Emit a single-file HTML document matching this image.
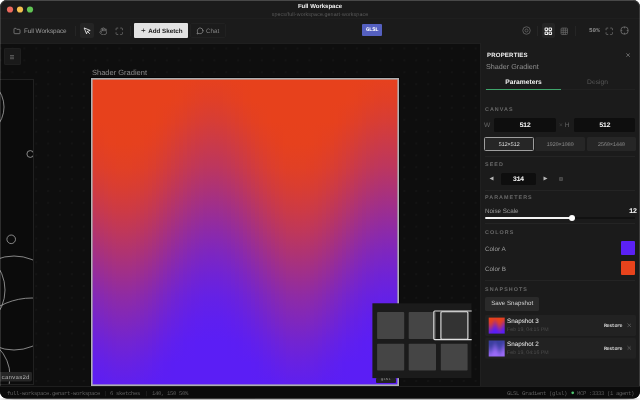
<!DOCTYPE html>
<html lang="en">
<head>
<meta charset="utf-8">
<title>Full Workspace</title>
<style>
*{box-sizing:border-box;margin:0;padding:0}
html,body{width:640px;height:400px;overflow:hidden;background:#fff}
body{font-family:"Liberation Sans",sans-serif;color:#ddd;position:relative}
.mono{font-family:"Liberation Mono",monospace}
#win{position:absolute;left:0;top:0;width:640px;height:398.6px;overflow:hidden;background:#0e0e0e;clip-path:inset(0px 0px 0px 0px round 7px)}
#win div{will-change:transform}
body{-webkit-font-smoothing:antialiased;text-rendering:geometricPrecision}
.abs{position:absolute}
.t{position:absolute;white-space:nowrap;line-height:1}
/* title bar */
#titlebar{position:absolute;left:0;top:0;width:640px;height:18.5px;background:#1b1b1b;box-shadow:inset 0 -1px 0 #1f1f1f}
.tl{position:absolute;top:6.3px;width:6.4px;height:6.4px;border-radius:50%}
#toolbar{position:absolute;left:0;top:18.5px;width:640px;height:24.5px;background:#1b1b1b;box-shadow:inset 0 -1px 0 #1f1f1f}
.sep{position:absolute;top:7px;width:1px;height:10px;background:#252525}
.tbtn{position:absolute;top:4px;height:14.5px;border-radius:2px}
/* canvas */
#canvas{position:absolute;left:0;top:43px;width:480px;height:343.4px;background-color:#0e0e0e;
 background-image:radial-gradient(circle,#1f1f1f 0.4px,transparent 0.85px);background-size:11.88px 11.88px;background-position:6.56px -0.44px;overflow:hidden}
/* panel */
#panel{position:absolute;left:480px;top:43px;width:160px;height:343.4px;background:#1b1b1b;box-shadow:inset 1px 0 0 #202020}
.lab{position:absolute;left:5px;font-size:5.4px;letter-spacing:1.04px;color:#686868;font-weight:bold;line-height:1;white-space:nowrap}
.div{position:absolute;left:5px;width:150px;height:1px;background:#242424}
.inp{position:absolute;background:#0e0e0e;border-radius:1.5px;color:#f4f4f4;font-weight:bold;font-size:6.9px;letter-spacing:-0.5px;text-align:center}
.preset{position:absolute;top:94px;height:14.2px;background:#262626;border-radius:1.5px;color:#848484;font-size:5.6px;letter-spacing:-0.36px;text-align:center;line-height:15.6px}
.row{position:absolute;left:4.5px;width:151.2px;height:20.5px;background:#222;border-radius:1.5px}
#status{position:absolute;left:0;top:386px;width:640px;height:14px;background:#0b0b0b;box-shadow:inset 0 1px 0 #1e1e1e;font-size:5.6px;letter-spacing:-0.36px;color:#5e5e5e}
</style>
</head>
<body>
<div class="abs" style="left:0;top:398px;width:640px;height:2px;background:linear-gradient(to right,#f4f4f4 0,#e0e0e0 5px,#c0c0c0 14px,#bbb 30px,#bbb 610px,#c0c0c0 626px,#e0e0e0 635px,#f4f4f4 640px)"></div>
<div id="win">

<!-- canvas -->
<div id="canvas">
  <!-- menu button -->
  <div class="abs" style="left:4px;top:5px;width:16.6px;height:17px;background:#1a1a1a;border-radius:2px;box-shadow:inset 0 0 0 0.6px #242424"></div>
  <svg class="abs" style="left:10.2px;top:12.3px" width="4.3" height="4.3" viewBox="0 0 9 9" stroke="#747474" stroke-width="1.5"><path d="M0 1.2H9M0 4.500H9M0 7.800H9"/></svg>

  <!-- left sketch -->
  <div class="abs" style="left:-120px;top:36px;width:154px;height:306px;background:#0b0b0b;border:1px solid #212121;overflow:hidden">
    <svg width="154" height="306" viewBox="-120 79 154 306" style="position:absolute;left:-1px;top:-1px" fill="none" stroke="#a4a4a4" stroke-width="0.8">
      <circle cx="-26" cy="107" r="30"/>
      <circle cx="30.300" cy="154" r="3.400"/>
      <circle cx="11.200" cy="239.300" r="4.300"/>
      <circle cx="14" cy="303" r="47"/>
      <circle cx="32" cy="366" r="68"/>
      <circle cx="-37.500" cy="290" r="42.500"/>
      <circle cx="-30" cy="376" r="40"/>
    </svg>
  </div>
  <div class="abs mono" style="left:-3px;top:328px;transform:translateY(0.5px);width:35px;height:10px;background:#262626;border-radius:2px;color:#b4b4b4;font-size:5.800px;line-height:11.400px;padding-left:4.500px;letter-spacing:0.020px">canvas2d</div>

  <!-- main sketch -->
  <div class="t" style="left:92.2px;top:25px;transform:translateY(0.7px);font-size:7.5px;color:#8c8c8c">Shader Gradient</div>
  <div class="abs" style="left:90px;top:34px;width:310px;height:310px;background:#050505;border-radius:1px"></div>
  <div class="abs" style="left:91px;top:35px;width:308px;height:308px;background:#adafb1;overflow:hidden">
    <div style="position:absolute;left:1px;top:1px;width:306px;height:306px;display:flex">
<i style="flex:1 0 0;background:linear-gradient(#e7411c 0%,#e7411c 7%,#e7411d 14%,#e24023 21%,#da3e30 29%,#cf3b41 36%,#c13856 43%,#b2346e 50%,#a23087 57%,#922ca0 64%,#8228b8 71%,#7424ce 79%,#6921e0 86%,#601fed 93%,#5c1ef4 100%)"></i>
<i style="flex:1 0 0;background:linear-gradient(#e7411c 0%,#e7411c 7%,#e7411c 14%,#e44021 21%,#dc3e2d 29%,#d13c3d 36%,#c43852 43%,#b53569 50%,#a53082 57%,#952c9c 64%,#8529b4 71%,#7725ca 79%,#6b22dd 86%,#6220eb 93%,#5c1ef3 100%)"></i>
<i style="flex:1 0 0;background:linear-gradient(#e7411c 0%,#e7411c 7%,#e7411c 14%,#e44020 21%,#de3f2a 29%,#d33c3a 36%,#c7394e 43%,#b83565 50%,#a8317e 57%,#982d97 64%,#8829b0 71%,#7926c6 79%,#6d22da 86%,#6320e9 93%,#5d1ef2 100%)"></i>
<i style="flex:1 0 0;background:linear-gradient(#e7411c 0%,#e7411c 7%,#e7411c 14%,#e5411f 21%,#df3f28 29%,#d53d38 36%,#c9394b 43%,#ba3662 50%,#aa327a 57%,#9a2e93 64%,#8a2aac 71%,#7b26c3 79%,#6e23d7 86%,#6420e7 93%,#5d1ff1 100%)"></i>
<i style="flex:1 0 0;background:linear-gradient(#e7411c 0%,#e7411c 7%,#e7411c 14%,#e6411e 21%,#e03f27 29%,#d73d35 36%,#ca3a48 43%,#bc365f 50%,#ac3277 57%,#9c2e90 64%,#8c2aa9 71%,#7d26c0 79%,#7023d5 86%,#6521e5 93%,#5e1ff0 100%)"></i>
<i style="flex:1 0 0;background:linear-gradient(#e7411c 0%,#e7411c 7%,#e7411c 14%,#e6411e 21%,#e13f26 29%,#d83d34 36%,#cc3a46 43%,#bd375d 50%,#ae3375 57%,#9e2f8e 64%,#8d2ba7 71%,#7e27be 79%,#7123d3 86%,#6621e4 93%,#5f1fef 100%)"></i>
<i style="flex:1 0 0;background:linear-gradient(#e7411c 0%,#e7411c 7%,#e7411c 14%,#e6411d 21%,#e14025 29%,#d83d33 36%,#cc3a45 43%,#be375b 50%,#af3373 57%,#9f2f8c 64%,#8e2ba5 71%,#7f27bd 79%,#7224d2 86%,#6721e3 93%,#5f1fef 100%)"></i>
<i style="flex:1 0 0;background:linear-gradient(#e7411c 0%,#e7411c 7%,#e7411c 14%,#e6411d 21%,#e14025 29%,#d93d32 36%,#cd3a44 43%,#bf375a 50%,#af3372 57%,#9f2f8b 64%,#8f2ba4 71%,#8027bc 79%,#7224d1 86%,#6721e2 93%,#5f1fef 100%)"></i>
<i style="flex:1 0 0;background:linear-gradient(#e7411c 0%,#e7411c 7%,#e7411c 14%,#e6411d 21%,#e14025 29%,#d93d32 36%,#cd3a44 43%,#bf375a 50%,#af3372 57%,#9f2f8b 64%,#8f2ba4 71%,#8027bc 79%,#7224d1 86%,#6721e2 93%,#5f1fef 100%)"></i>
<i style="flex:1 0 0;background:linear-gradient(#e7411c 0%,#e7411c 7%,#e7411c 14%,#e6411d 21%,#e14025 29%,#d83d33 36%,#cd3a45 43%,#be375b 50%,#af3373 57%,#9f2f8c 64%,#8f2ba5 71%,#7f27bd 79%,#7224d2 86%,#6721e3 93%,#5f1fef 100%)"></i>
<i style="flex:1 0 0;background:linear-gradient(#e7411c 0%,#e7411c 7%,#e7411c 14%,#e6411e 21%,#e13f26 29%,#d83d34 36%,#cc3a46 43%,#bd375c 50%,#ae3375 57%,#9e2f8e 64%,#8e2ba7 71%,#7e27be 79%,#7124d3 86%,#6621e4 93%,#5f1fef 100%)"></i>
<i style="flex:1 0 0;background:linear-gradient(#e7411c 0%,#e7411c 7%,#e7411c 14%,#e6411e 21%,#e03f27 29%,#d73d35 36%,#ca3a48 43%,#bc365f 50%,#ac3277 57%,#9c2e90 64%,#8c2aa9 71%,#7d27c0 79%,#7023d5 86%,#6521e5 93%,#5e1ff0 100%)"></i>
<i style="flex:1 0 0;background:linear-gradient(#e7411c 0%,#e7411c 7%,#e7411c 14%,#e5411f 21%,#df3f28 29%,#d53d37 36%,#c9394b 43%,#ba3661 50%,#aa327a 57%,#9a2e93 64%,#8a2aac 71%,#7b26c3 79%,#6e23d7 86%,#6420e7 93%,#5d1ff1 100%)"></i>
<i style="flex:1 0 0;background:linear-gradient(#e7411c 0%,#e7411c 7%,#e7411c 14%,#e54020 21%,#de3f2a 29%,#d43c3a 36%,#c7394e 43%,#b83565 50%,#a8317e 57%,#982d97 64%,#8829af 71%,#7926c6 79%,#6d22d9 86%,#6320e9 93%,#5d1ef2 100%)"></i>
<i style="flex:1 0 0;background:linear-gradient(#e7411c 0%,#e7411c 7%,#e7411c 14%,#e44021 21%,#dc3e2d 29%,#d23c3d 36%,#c43852 43%,#b53569 50%,#a53182 57%,#952c9b 64%,#8529b3 71%,#7725ca 79%,#6b22dc 86%,#6220eb 93%,#5c1ef3 100%)"></i>
<i style="flex:1 0 0;background:linear-gradient(#e7411c 0%,#e7411c 7%,#e7411d 14%,#e34023 21%,#db3e2f 29%,#cf3b41 36%,#c23856 43%,#b2346e 50%,#a23087 57%,#922ca0 64%,#8228b8 71%,#7524cd 79%,#6921df 86%,#601fed 93%,#5c1ef4 100%)"></i>
<i style="flex:1 0 0;background:linear-gradient(#e7411c 0%,#e7411c 7%,#e6411d 14%,#e14025 21%,#d83d33 29%,#cd3a45 36%,#bf375b 43%,#af3373 50%,#9f2f8c 57%,#8f2ba5 64%,#7f27bd 71%,#7224d1 79%,#6721e3 86%,#5f1fef 93%,#5b1ef5 100%)"></i>
<i style="flex:1 0 0;background:linear-gradient(#e7411c 0%,#e7411c 7%,#e5411e 14%,#e03f27 21%,#d63d36 29%,#ca3a49 36%,#bb3660 43%,#ab3278 50%,#9b2e91 57%,#8b2aaa 64%,#7c26c1 71%,#6f23d6 79%,#6520e6 86%,#5e1ff1 93%,#5b1ef5 100%)"></i>
<i style="flex:1 0 0;background:linear-gradient(#e7411c 0%,#e7411c 7%,#e54020 14%,#de3f2a 21%,#d43c3a 29%,#c7394e 36%,#b83565 43%,#a8317e 50%,#982d97 57%,#8829b0 64%,#7926c6 71%,#6d22da 79%,#6320e9 86%,#5d1ef2 93%,#5b1ef5 100%)"></i>
<i style="flex:1 0 0;background:linear-gradient(#e7411c 0%,#e7411c 7%,#e34022 14%,#dc3e2e 21%,#d13b3e 29%,#c33853 36%,#b4346b 43%,#a43084 50%,#942c9d 57%,#8428b5 64%,#7625cb 71%,#6a22de 79%,#6120eb 86%,#5c1ef3 93%,#5b1ef5 100%)"></i>
<i style="flex:1 0 0;background:linear-gradient(#e7411c 0%,#e6411d 7%,#e24024 14%,#d93e31 21%,#ce3b43 29%,#c03758 36%,#b13370 43%,#a02f89 50%,#902ba2 57%,#8127ba 64%,#7324d0 71%,#6821e1 79%,#601fee 86%,#5b1ef4 93%,#5b1ef5 100%)"></i>
<i style="flex:1 0 0;background:linear-gradient(#e7411c 0%,#e6411e 7%,#e03f26 14%,#d73d35 21%,#cb3a47 29%,#bd365d 36%,#ad3376 43%,#9d2e8f 50%,#8d2aa8 57%,#7e27bf 64%,#7023d4 71%,#6621e4 79%,#5e1ff0 86%,#5b1ef5 93%,#5b1ef5 100%)"></i>
<i style="flex:1 0 0;background:linear-gradient(#e7411c 0%,#e5411f 7%,#df3f29 14%,#d53c38 21%,#c8394c 29%,#ba3662 36%,#aa327b 43%,#992e94 50%,#8a2aad 57%,#7b26c4 64%,#6e23d8 71%,#6420e7 79%,#5d1ff1 86%,#5b1ef5 93%,#5b1ef5 100%)"></i>
<i style="flex:1 0 0;background:linear-gradient(#e7411c 0%,#e44020 7%,#dd3f2b 14%,#d33c3c 21%,#c53950 29%,#b73567 36%,#a73180 43%,#962d99 50%,#8729b1 57%,#7825c8 64%,#6c22db 71%,#6220ea 79%,#5c1ef3 86%,#5b1ef5 93%,#5b1ef5 100%)"></i>
<i style="flex:1 0 0;background:linear-gradient(#e7411c 0%,#e34022 7%,#db3e2e 14%,#d03b3f 21%,#c33854 29%,#b4346b 36%,#a43084 43%,#932c9d 50%,#8428b6 57%,#7625cb 64%,#6a22de 71%,#611fec 79%,#5c1ef4 86%,#5b1ef5 93%,#5b1ef5 100%)"></i>
<i style="flex:1 0 0;background:linear-gradient(#e7411d 0%,#e24023 7%,#da3e30 14%,#cf3b42 21%,#c13757 29%,#b1346f 36%,#a13088 43%,#912ca1 50%,#8228b9 57%,#7424cf 64%,#6821e0 71%,#601fed 79%,#5c1ef4 86%,#5b1ef5 93%,#5b1ef5 100%)"></i>
<i style="flex:1 0 0;background:linear-gradient(#e6411d 0%,#e14025 7%,#d93d32 14%,#cd3a44 21%,#bf375a 29%,#af3372 36%,#9f2f8b 43%,#8f2ba4 50%,#8027bc 57%,#7224d1 64%,#6721e2 71%,#5f1fef 79%,#5b1ef5 86%,#5b1ef5 93%,#5b1ef5 100%)"></i>
<i style="flex:1 0 0;background:linear-gradient(#e6411e 0%,#e13f26 7%,#d83d34 14%,#cc3a46 21%,#bd375d 29%,#ae3375 36%,#9e2f8e 43%,#8d2ba7 50%,#7e27be 57%,#7123d3 64%,#6621e4 71%,#5f1fef 79%,#5b1ef5 86%,#5b1ef5 93%,#5b1ef5 100%)"></i>
<i style="flex:1 0 0;background:linear-gradient(#e6411e 0%,#e03f27 7%,#d73d35 14%,#cb3a48 21%,#bc365e 29%,#ad3276 36%,#9c2e90 43%,#8c2aa9 50%,#7d27c0 57%,#7023d4 64%,#6521e5 71%,#5e1ff0 79%,#5b1ef5 86%,#5b1ef5 93%,#5b1ef5 100%)"></i>
<i style="flex:1 0 0;background:linear-gradient(#e6411e 0%,#e03f27 7%,#d63d36 14%,#ca3a49 21%,#bc365f 29%,#ac3277 36%,#9c2e91 43%,#8c2aa9 50%,#7d26c1 57%,#7023d5 64%,#6521e5 71%,#5e1ff0 79%,#5b1ef5 86%,#5b1ef5 93%,#5b1ef5 100%)"></i>
<i style="flex:1 0 0;background:linear-gradient(#e6411e 0%,#e03f27 7%,#d63d36 14%,#ca3a49 21%,#bc365f 29%,#ac3278 36%,#9c2e91 43%,#8c2aaa 50%,#7d26c1 57%,#7023d5 64%,#6521e5 71%,#5e1ff0 79%,#5b1ef5 86%,#5b1ef5 93%,#5b1ef5 100%)"></i>
<i style="flex:1 0 0;background:linear-gradient(#e6411e 0%,#e03f27 7%,#d73d35 14%,#ca3a48 21%,#bc365f 29%,#ac3277 36%,#9c2e90 43%,#8c2aa9 50%,#7d27c0 57%,#7023d5 64%,#6521e5 71%,#5e1ff0 79%,#5b1ef5 86%,#5b1ef5 93%,#5b1ef5 100%)"></i>
<i style="flex:1 0 0;background:linear-gradient(#e6411e 0%,#e03f26 7%,#d73d34 14%,#cb3a47 21%,#bd365d 29%,#ad3375 36%,#9d2f8f 43%,#8d2aa8 50%,#7e27bf 57%,#7123d4 64%,#6621e4 71%,#5e1ff0 79%,#5b1ef5 86%,#5b1ef5 93%,#5b1ef5 100%)"></i>
<i style="flex:1 0 0;background:linear-gradient(#e6411d 0%,#e14025 7%,#d83d33 14%,#cc3a45 21%,#be375b 29%,#af3373 36%,#9e2f8c 43%,#8e2ba5 50%,#7f27bd 57%,#7224d2 64%,#6721e3 71%,#5f1fef 79%,#5b1ef5 86%,#5b1ef5 93%,#5b1ef5 100%)"></i>
<i style="flex:1 0 0;background:linear-gradient(#e6411d 0%,#e24024 7%,#d93e31 14%,#ce3b43 21%,#c03758 29%,#b13370 36%,#a02f89 43%,#902ba2 50%,#8127ba 57%,#7324d0 64%,#6821e1 71%,#601fee 79%,#5b1ef4 86%,#5b1ef5 93%,#5b1ef5 100%)"></i>
<i style="flex:1 0 0;background:linear-gradient(#e7411c 0%,#e34022 7%,#db3e2f 14%,#d03b40 21%,#c23855 29%,#b3346d 36%,#a33086 43%,#932c9f 50%,#8328b7 57%,#7525cd 64%,#6922df 71%,#611fec 79%,#5c1ef4 86%,#5b1ef5 93%,#5b1ef5 100%)"></i>
<i style="flex:1 0 0;background:linear-gradient(#e7411c 0%,#e44021 7%,#dc3e2c 14%,#d23c3d 21%,#c53851 29%,#b63569 36%,#a53182 43%,#952d9b 50%,#8629b3 57%,#7725c9 64%,#6b22dc 71%,#6220ea 79%,#5c1ef3 86%,#5b1ef5 93%,#5b1ef5 100%)"></i>
<i style="flex:1 0 0;background:linear-gradient(#e7411c 0%,#e54020 7%,#de3f2a 14%,#d43c39 21%,#c7394d 29%,#b83564 36%,#a9317d 43%,#982d96 50%,#8829af 57%,#7a26c5 64%,#6d23d9 71%,#6320e8 79%,#5d1ef2 86%,#5b1ef5 93%,#5b1ef5 100%)"></i>
<i style="flex:1 0 0;background:linear-gradient(#e7411c 0%,#e6411e 7%,#e03f27 14%,#d63d36 21%,#ca3a49 29%,#bc365f 36%,#ac3278 43%,#9c2e91 50%,#8c2aaa 57%,#7d26c1 64%,#7023d5 71%,#6521e5 79%,#5e1ff0 86%,#5b1ef5 93%,#5b1ef5 100%)"></i>
<i style="flex:1 0 0;background:linear-gradient(#e7411c 0%,#e6411d 7%,#e14025 14%,#d93d32 21%,#cd3a44 29%,#bf375a 36%,#af3372 43%,#9f2f8b 50%,#8f2ba4 57%,#8027bc 64%,#7224d1 71%,#6721e2 79%,#5f1fef 86%,#5b1ef5 93%,#5b1ef5 100%)"></i>
<i style="flex:1 0 0;background:linear-gradient(#e7411c 0%,#e7411c 7%,#e34022 14%,#db3e2f 21%,#d03b40 29%,#c23855 36%,#b3346d 43%,#a33086 50%,#932c9f 57%,#8328b7 64%,#7525cd 71%,#6922df 79%,#611fec 86%,#5c1ef4 93%,#5b1ef5 100%)"></i>
<i style="flex:1 0 0;background:linear-gradient(#e7411c 0%,#e7411c 7%,#e44021 14%,#dd3f2b 21%,#d33c3c 29%,#c53950 36%,#b63567 43%,#a63180 50%,#962d99 57%,#8629b2 64%,#7825c8 71%,#6c22db 79%,#6220ea 86%,#5c1ef3 93%,#5b1ef5 100%)"></i>
<i style="flex:1 0 0;background:linear-gradient(#e7411c 0%,#e7411c 7%,#e5411f 14%,#df3f28 21%,#d53d38 29%,#c9394b 36%,#ba3662 43%,#aa327a 50%,#9a2e94 57%,#8a2aac 64%,#7b26c3 71%,#6e23d7 79%,#6420e7 86%,#5d1ff1 93%,#5b1ef5 100%)"></i>
<i style="flex:1 0 0;background:linear-gradient(#e7411c 0%,#e7411c 7%,#e6411e 14%,#e13f26 21%,#d83d34 29%,#cc3a47 36%,#bd375d 43%,#ae3375 50%,#9d2f8e 57%,#8d2ba7 64%,#7e27be 71%,#7123d3 79%,#6621e4 86%,#5f1fef 93%,#5b1ef5 100%)"></i>
<i style="flex:1 0 0;background:linear-gradient(#e7411c 0%,#e7411c 7%,#e7411d 14%,#e24024 21%,#da3e30 29%,#ce3b42 36%,#c13758 43%,#b13470 50%,#a12f89 57%,#912ba2 64%,#8128ba 71%,#7424cf 79%,#6821e1 86%,#601fee 93%,#5b1ef4 100%)"></i>
<i style="flex:1 0 0;background:linear-gradient(#e7411c 0%,#e7411c 7%,#e7411c 14%,#e34022 21%,#dc3e2e 29%,#d13b3e 36%,#c33853 43%,#b4346b 50%,#a43084 57%,#942c9d 64%,#8428b5 71%,#7625cb 79%,#6a22de 86%,#6120eb 93%,#5c1ef3 100%)"></i>
<i style="flex:1 0 0;background:linear-gradient(#e7411c 0%,#e7411c 7%,#e7411c 14%,#e44020 21%,#dd3f2b 29%,#d33c3b 36%,#c6394f 43%,#b73566 50%,#a7317f 57%,#972d98 64%,#8729b1 71%,#7925c7 79%,#6c22db 86%,#6320e9 93%,#5d1ef3 100%)"></i>
<i style="flex:1 0 0;background:linear-gradient(#e7411c 0%,#e7411c 7%,#e7411c 14%,#e5401f 21%,#df3f29 29%,#d53c38 36%,#c8394c 43%,#b93663 50%,#aa327b 57%,#992e94 64%,#892aad 71%,#7b26c4 79%,#6e23d8 86%,#6420e7 93%,#5d1ff2 100%)"></i>
<i style="flex:1 0 0;background:linear-gradient(#e7411c 0%,#e7411c 7%,#e7411c 14%,#e6411e 21%,#e03f27 29%,#d63d36 36%,#ca3a49 43%,#bb3660 50%,#ac3278 57%,#9b2e91 64%,#8b2aaa 71%,#7d26c1 79%,#6f23d5 86%,#6520e6 93%,#5e1ff1 100%)"></i>
<i style="flex:1 0 0;background:linear-gradient(#e7411c 0%,#e7411c 7%,#e7411c 14%,#e6411e 21%,#e03f26 29%,#d73d34 36%,#cb3a47 43%,#bd375d 50%,#ad3375 57%,#9d2f8e 64%,#8d2ba7 71%,#7e27bf 79%,#7123d3 86%,#6621e4 93%,#5e1ff0 100%)"></i>
<i style="flex:1 0 0;background:linear-gradient(#e7411c 0%,#e7411c 7%,#e7411c 14%,#e6411d 21%,#e14025 29%,#d83d33 36%,#cc3a45 43%,#be375b 50%,#af3373 57%,#9e2f8d 64%,#8e2ba6 71%,#7f27bd 79%,#7224d2 86%,#6721e3 93%,#5f1fef 100%)"></i>
<i style="flex:1 0 0;background:linear-gradient(#e7411c 0%,#e7411c 7%,#e7411c 14%,#e6411d 21%,#e14025 29%,#d93d32 36%,#cd3a45 43%,#bf375a 50%,#af3372 57%,#9f2f8c 64%,#8f2ba5 71%,#8027bc 79%,#7224d1 86%,#6721e2 93%,#5f1fef 100%)"></i>
<i style="flex:1 0 0;background:linear-gradient(#e7411c 0%,#e7411c 7%,#e7411c 14%,#e6411d 21%,#e14025 29%,#d93d32 36%,#cd3a44 43%,#bf375a 50%,#af3372 57%,#9f2f8b 64%,#8f2ba4 71%,#8027bc 79%,#7224d1 86%,#6721e2 93%,#5f1fef 100%)"></i>
<i style="flex:1 0 0;background:linear-gradient(#e7411c 0%,#e7411c 7%,#e7411c 14%,#e6411d 21%,#e14025 29%,#d83d33 36%,#cd3a45 43%,#bf375b 50%,#af3373 57%,#9f2f8c 64%,#8f2ba5 71%,#8027bc 79%,#7224d1 86%,#6721e3 93%,#5f1fef 100%)"></i>
<i style="flex:1 0 0;background:linear-gradient(#e7411c 0%,#e7411c 7%,#e7411c 14%,#e6411d 21%,#e13f26 29%,#d83d33 36%,#cc3a46 43%,#be375c 50%,#ae3374 57%,#9e2f8d 64%,#8e2ba6 71%,#7f27be 79%,#7124d2 86%,#6621e3 93%,#5f1fef 100%)"></i>
<i style="flex:1 0 0;background:linear-gradient(#e7411c 0%,#e7411c 7%,#e7411c 14%,#e6411e 21%,#e03f26 29%,#d73d35 36%,#cb3a48 43%,#bd365e 50%,#ad3276 57%,#9d2e8f 64%,#8d2aa8 71%,#7e27c0 79%,#7023d4 86%,#6621e5 93%,#5e1ff0 100%)"></i>
<i style="flex:1 0 0;background:linear-gradient(#e7411c 0%,#e7411c 7%,#e7411c 14%,#e5411f 21%,#df3f28 29%,#d63d37 36%,#c93a4a 43%,#bb3661 50%,#ab3279 57%,#9b2e92 64%,#8b2aab 71%,#7c26c2 79%,#6f23d6 86%,#6520e6 93%,#5e1ff1 100%)"></i>
<i style="flex:1 0 0;background:linear-gradient(#e7411c 0%,#e7411c 7%,#e7411c 14%,#e5401f 21%,#de3f2a 29%,#d43c39 36%,#c7394d 43%,#b93564 50%,#a9317d 57%,#982d96 64%,#8929ae 71%,#7a26c5 79%,#6d23d9 86%,#6320e8 93%,#5d1ff2 100%)"></i>
<i style="flex:1 0 0;background:linear-gradient(#e7411c 0%,#e7411c 7%,#e7411c 14%,#e44021 21%,#dd3e2c 29%,#d23c3c 36%,#c53951 43%,#b63568 50%,#a63181 57%,#962d9a 64%,#8629b2 71%,#7825c9 79%,#6b22dc 86%,#6220ea 93%,#5c1ef3 100%)"></i>
<i style="flex:1 0 0;background:linear-gradient(#e7411c 0%,#e7411c 7%,#e7411c 14%,#e34022 21%,#db3e2f 29%,#d03b40 36%,#c23855 43%,#b3346c 50%,#a33085 57%,#932c9e 64%,#8328b7 71%,#7525cc 79%,#6922df 86%,#611fec 93%,#5c1ef4 100%)"></i>
<i style="flex:1 0 0;background:linear-gradient(#e7411c 0%,#e7411c 7%,#e6411d 14%,#e24024 21%,#d93e32 29%,#cd3b44 36%,#bf3759 43%,#b03371 50%,#a02f8a 57%,#902ba3 64%,#8027bb 71%,#7324d0 79%,#6721e2 86%,#5f1fee 93%,#5b1ef4 100%)"></i>
<i style="flex:1 0 0;background:linear-gradient(#e7411c 0%,#e7411c 7%,#e6411e 14%,#e03f27 21%,#d73d35 29%,#cb3a48 36%,#bc365e 43%,#ac3277 50%,#9c2e90 57%,#8c2aa9 64%,#7d27c0 71%,#7023d4 79%,#6521e5 86%,#5e1ff0 93%,#5b1ef5 100%)"></i>
<i style="flex:1 0 0;background:linear-gradient(#e7411c 0%,#e7411c 7%,#e5401f 14%,#de3f2a 21%,#d43c39 29%,#c7394d 36%,#b93564 43%,#a9317c 50%,#992d96 57%,#8929ae 64%,#7a26c5 71%,#6d23d9 79%,#6320e8 86%,#5d1ff2 93%,#5b1ef5 100%)"></i>
<i style="flex:1 0 0;background:linear-gradient(#e7411c 0%,#e7411c 7%,#e44021 14%,#dc3e2d 21%,#d23c3d 29%,#c43852 36%,#b53569 43%,#a53182 50%,#952c9b 57%,#8529b4 64%,#7725ca 71%,#6b22dc 79%,#6220eb 86%,#5c1ef3 93%,#5b1ef5 100%)"></i>
<i style="flex:1 0 0;background:linear-gradient(#e7411c 0%,#e7411d 7%,#e24023 14%,#da3e30 21%,#cf3b42 29%,#c13757 36%,#b2346f 43%,#a13088 50%,#912ca1 57%,#8228b9 64%,#7424ce 71%,#6821e0 79%,#601fed 86%,#5c1ef4 93%,#5b1ef5 100%)"></i>
<i style="flex:1 0 0;background:linear-gradient(#e7411c 0%,#e6411e 7%,#e13f26 14%,#d83d34 21%,#cc3a46 29%,#be375c 36%,#ae3374 43%,#9e2f8d 50%,#8e2ba6 57%,#7f27be 64%,#7124d3 71%,#6621e4 79%,#5f1fef 86%,#5b1ef5 93%,#5b1ef5 100%)"></i>
<i style="flex:1 0 0;background:linear-gradient(#e7411c 0%,#e5411f 7%,#df3f28 14%,#d53d37 21%,#c9394b 29%,#ba3661 36%,#ab327a 43%,#9a2e93 50%,#8a2aac 57%,#7c26c3 64%,#6f23d7 71%,#6420e6 79%,#5e1ff1 86%,#5b1ef5 93%,#5b1ef5 100%)"></i>
<i style="flex:1 0 0;background:linear-gradient(#e7411c 0%,#e44020 7%,#de3f2b 14%,#d33c3b 21%,#c6394f 29%,#b73566 36%,#a7317f 43%,#972d98 50%,#8729b0 57%,#7925c7 64%,#6c22da 71%,#6320e9 79%,#5d1ef2 86%,#5b1ef5 93%,#5b1ef5 100%)"></i>
<i style="flex:1 0 0;background:linear-gradient(#e7411c 0%,#e34022 7%,#dc3e2d 14%,#d13c3e 21%,#c43853 29%,#b5346a 36%,#a43083 43%,#942c9c 50%,#8528b5 57%,#7625cb 64%,#6a22dd 71%,#6120eb 79%,#5c1ef3 86%,#5b1ef5 93%,#5b1ef5 100%)"></i>
<i style="flex:1 0 0;background:linear-gradient(#e7411d 0%,#e24023 7%,#da3e30 14%,#cf3b41 21%,#c13856 29%,#b2346e 36%,#a23087 43%,#922ca0 50%,#8228b8 57%,#7424ce 64%,#6921e0 71%,#601fed 79%,#5c1ef4 86%,#5b1ef5 93%,#5b1ef5 100%)"></i>
<i style="flex:1 0 0;background:linear-gradient(#e6411d 0%,#e24024 7%,#d93d32 14%,#cd3b44 21%,#bf3759 29%,#b03371 36%,#a02f8b 43%,#902ba4 50%,#8027bb 57%,#7324d0 64%,#6721e2 71%,#5f1fee 79%,#5b1ef5 86%,#5b1ef5 93%,#5b1ef5 100%)"></i>
<i style="flex:1 0 0;background:linear-gradient(#e6411e 0%,#e13f26 7%,#d83d33 14%,#cc3a46 21%,#be375c 29%,#ae3374 36%,#9e2f8d 43%,#8e2ba6 50%,#7f27be 57%,#7124d3 64%,#6621e3 71%,#5f1fef 79%,#5b1ef5 86%,#5b1ef5 93%,#5b1ef5 100%)"></i>
<i style="flex:1 0 0;background:linear-gradient(#e6411e 0%,#e03f26 7%,#d73d35 14%,#cb3a48 21%,#bd365e 29%,#ad3276 36%,#9d2e8f 43%,#8d2aa8 50%,#7e27bf 57%,#7023d4 64%,#6621e5 71%,#5e1ff0 79%,#5b1ef5 86%,#5b1ef5 93%,#5b1ef5 100%)"></i>
<i style="flex:1 0 0;background:linear-gradient(#e6411e 0%,#e03f27 7%,#d73d36 14%,#ca3a49 21%,#bc365f 29%,#ac3277 36%,#9c2e90 43%,#8c2aa9 50%,#7d26c0 57%,#7023d5 64%,#6521e5 71%,#5e1ff0 79%,#5b1ef5 86%,#5b1ef5 93%,#5b1ef5 100%)"></i>
<i style="flex:1 0 0;background:linear-gradient(#e6411e 0%,#e03f27 7%,#d63d36 14%,#ca3a49 21%,#bc365f 29%,#ac3278 36%,#9c2e91 43%,#8c2aaa 50%,#7d26c1 57%,#7023d5 64%,#6521e5 71%,#5e1ff0 79%,#5b1ef5 86%,#5b1ef5 93%,#5b1ef5 100%)"></i>
<i style="flex:1 0 0;background:linear-gradient(#e6411e 0%,#e03f27 7%,#d73d35 14%,#ca3a49 21%,#bc365f 29%,#ac3277 36%,#9c2e90 43%,#8c2aa9 50%,#7d26c0 57%,#7023d5 64%,#6521e5 71%,#5e1ff0 79%,#5b1ef5 86%,#5b1ef5 93%,#5b1ef5 100%)"></i>
<i style="flex:1 0 0;background:linear-gradient(#e6411e 0%,#e03f26 7%,#d73d35 14%,#cb3a47 21%,#bd365e 29%,#ad3276 36%,#9d2e8f 43%,#8d2aa8 50%,#7e27bf 57%,#7023d4 64%,#6621e4 71%,#5e1ff0 79%,#5b1ef5 86%,#5b1ef5 93%,#5b1ef5 100%)"></i>
    </div>
    <svg class="abs" style="left:0;top:0" width="308" height="308" viewBox="0 0 308 308" fill="none"><rect x="0.8" y="0.8" width="306.4" height="306.4" stroke="#adafb1" stroke-width="1.6"/></svg>
  </div>
  <div class="abs mono" style="left:376px;top:334.5px;width:19.5px;height:5px;background:#222;border-radius:1px;color:#aaa;font-size:4px;line-height:5px;text-align:center">glsl</div>

  <!-- minimap -->
  <svg class="abs" style="left:372px;top:260px" width="100" height="76" viewBox="372 303 100 76">
    <rect x="372.400" y="303.300" width="99.300" height="74.800" fill="#1b1b1b"/>
    <g fill="#454545">
      <rect x="377.100" y="312.100" width="27.100" height="26.900" rx="0.800"/>
      <rect x="408.700" y="312.100" width="27.300" height="26.900" rx="0.800"/>
      <rect x="377.100" y="343.700" width="27.100" height="26.800" rx="0.800"/>
      <rect x="408.700" y="343.700" width="27.300" height="26.800" rx="0.800"/>
      <rect x="440.800" y="343.700" width="26.800" height="26.800" rx="0.800"/>
    </g>
    <rect x="440.900" y="311.700" width="27" height="27.500" rx="1" fill="#333" stroke="#e6e6e6" stroke-width="1.100"/>
    <rect x="433.800" y="311" width="50" height="28.600" rx="1" fill="none" stroke="#e0e0e0" stroke-width="1.100"/>
    <rect x="471.700" y="303" width="20" height="76" fill="#0e0e0e"/>
  </svg>
</div>

<!-- title bar -->
<div id="titlebar">
  <svg class="abs" style="left:0;top:0" width="40" height="18" viewBox="0 0 40 18"><circle cx="10" cy="9.5" r="3.1" fill="#ec6a5e"/><circle cx="20" cy="9.5" r="3.1" fill="#f4bf4f"/><circle cx="30" cy="9.5" r="3.1" fill="#61c554"/></svg>
  <div class="t" style="left:0;width:640px;text-align:center;top:3px;transform:translateY(0.8px);font-size:6px;font-weight:bold;color:#f2f2f2">Full Workspace</div>
  <div class="t" style="left:0;width:640px;text-align:center;top:12.8px;font-size:5.3px;color:#5a5a5a;letter-spacing:0.1px">specs/full-workspace.genart-workspace</div>
</div>

<!-- toolbar -->
<div id="toolbar">
  <svg class="abs" style="left:12.8px;top:8.1px" width="8" height="8" viewBox="0 0 24 24" fill="none" stroke="#808080" stroke-width="2.4" stroke-linejoin="round"><path d="M3 6a2 2 0 0 1 2-2h4l2.5 3H19a2 2 0 0 1 2 2v9a2 2 0 0 1-2 2H5a2 2 0 0 1-2-2z"/></svg>
  <div class="t" style="left:23.6px;top:9.7px;font-size:6.4px;letter-spacing:-0.1px;color:#999">Full Workspace</div>
  <div class="sep" style="left:75px"></div>
  <div class="tbtn" style="left:80px;width:14px;background:#242424"></div>
  <svg class="abs" style="left:83.3px;top:7.9px" width="7.8" height="7.8" viewBox="0 0 24 24" fill="none" stroke="#f0f0f0" stroke-width="2.6" stroke-linejoin="round" stroke-linecap="round"><path d="M4 4l7 17 2.5-7.5L21 11z"/><path d="M14 14l6 6"/></svg>
  <svg class="abs" style="left:98.8px;top:7.5px" width="8.5" height="8.5" viewBox="0 0 24 24" fill="none" stroke="#6e6e6e" stroke-width="2.4" stroke-linejoin="round" stroke-linecap="round"><path d="M18 11V6a2 2 0 0 0-4 0v5M14 10V4a2 2 0 0 0-4 0v6M10 10.5V6a2 2 0 0 0-4 0v8"/><path d="M18 8a2 2 0 1 1 4 0v6a8 8 0 0 1-8 8h-2c-2.8 0-4.500-.86-5.990-2.340l-3.600-3.600a2 2 0 0 1 2.830-2.820L7 15"/></svg>
  <svg class="abs" style="left:114.8px;top:7.5px" width="8.5" height="8.5" viewBox="0 0 24 24" fill="none" stroke="#6e6e6e" stroke-width="2.4" stroke-linecap="round" stroke-linejoin="round"><path d="M3 8V5a2 2 0 0 1 2-2h3M16 3h3a2 2 0 0 1 2 2v3M21 16v3a2 2 0 0 1-2 2h-3M8 21H5a2 2 0 0 1-2-2v-3"/></svg>
  <div class="sep" style="left:130px"></div>
  <div class="tbtn" style="left:134px;width:53.5px;background:#e2e2e2;height:15px;top:4.3px;border-radius:1px"></div>
  <div class="t" style="left:140.5px;top:8px;transform:translateY(-0.2px);font-size:6.25px;font-weight:bold;color:#1a1a1a"><span style="font-weight:normal;font-size:8px;position:relative;top:-0.3px;margin-right:2.5px">+</span>Add Sketch</div>
  <div class="tbtn" style="left:189.8px;width:35.8px;border:1px solid #212121"></div>
  <svg class="abs" style="left:195.8px;top:8px" width="8" height="8" viewBox="0 0 24 24" fill="none" stroke="#8c8c8c" stroke-width="2.4" stroke-linejoin="round" stroke-linecap="round"><path d="M21 11.500a8.380 8.380 0 0 1-.9 3.800 8.500 8.500 0 0 1-7.600 4.700 8.380 8.380 0 0 1-3.800-.9L3 21l1.900-5.700a8.380 8.380 0 0 1-.9-3.800 8.500 8.500 0 0 1 4.700-7.600 8.380 8.380 0 0 1 3.800-.9h.5a8.480 8.480 0 0 1 8 8z"/></svg>
  <div class="t" style="left:206.2px;top:10.1px;font-size:6.3px;color:#858585">Chat</div>

  <div class="abs mono" style="left:362.4px;top:5px;width:20.3px;height:12px;background:#5560c0;border-radius:1px;color:#fff;font-weight:bold;font-size:5.5px;letter-spacing:-0.25px;line-height:12.8px;text-align:center">GLSL</div>

  <svg class="abs" style="left:521.5px;top:7.4px" width="9" height="9" viewBox="0 0 24 24" fill="none" stroke="#666" stroke-width="2.2"><circle cx="12" cy="12" r="10"/><circle cx="12" cy="12" r="4"/></svg>
  <div class="sep" style="left:537px"></div>
  <div class="tbtn" style="left:542px;width:13px;background:#242424"></div>
  <svg class="abs" style="left:544.2px;top:7.5px" width="8.6" height="8.6" viewBox="0 0 24 24" fill="none" stroke="#f0f0f0" stroke-width="3" stroke-linejoin="round"><rect x="3" y="3" width="7" height="7" rx="1.500"/><rect x="14" y="3" width="7" height="7" rx="1.500"/><rect x="3" y="14" width="7" height="7" rx="1.500"/><rect x="14" y="14" width="7" height="7" rx="1.500"/></svg>
  <svg class="abs" style="left:560.1px;top:7.5px" width="8.6" height="8.6" viewBox="0 0 24 24" fill="none" stroke="#666" stroke-width="2.2" stroke-linejoin="round"><rect x="3" y="3" width="18" height="18" rx="2.500"/><path d="M3 9h18M3 15h18M9 3v18M15 3v18"/></svg>
  <div class="sep" style="left:575px"></div>
  <div class="t mono" style="left:588.8px;top:9.2px;font-size:6px;color:#888;font-weight:bold">50%</div>
  <svg class="abs" style="left:604.8px;top:7.5px" width="8.5" height="8.5" viewBox="0 0 24 24" fill="none" stroke="#6e6e6e" stroke-width="2.4" stroke-linecap="round" stroke-linejoin="round"><path d="M3 8V5a2 2 0 0 1 2-2h3M16 3h3a2 2 0 0 1 2 2v3M21 16v3a2 2 0 0 1-2 2h-3M8 21H5a2 2 0 0 1-2-2v-3"/></svg>
  <svg class="abs" style="left:620.3px;top:7.4px" width="9" height="9" viewBox="0 0 24 24" fill="none" stroke="#6e6e6e" stroke-width="2.3"><circle cx="12" cy="12" r="10"/><path d="M12 2.500v3.500M12 18v3.500M2.500 12h3.500M18 12h3.500"/></svg>
</div>

<!-- panel -->
<div id="panel">
  <div class="t" style="left:6.5px;top:9.9px;font-size:6.1px;font-weight:bold;letter-spacing:0.15px;color:#f0f0f0">PROPERTIES</div>
  <svg class="abs" style="left:145.9px;top:10.2px" width="4.2" height="4.2" viewBox="0 0 10 10" stroke="#8a8a8a" stroke-width="1.6" stroke-linecap="round"><path d="M1.5 1.5L8.500 8.500M8.500 1.5L1.5 8.500"/></svg>
  <div class="t" style="left:6.2px;top:20.1px;font-size:7.2px;color:#8e8e8e">Shader Gradient</div>
  <div class="abs" style="left:5px;top:46px;width:150px;height:1px;background:#212121"></div>
  <div class="t" style="left:6px;width:75px;text-align:center;top:37.3px;font-size:6.7px;font-weight:bold;color:#f0f0f0">Parameters</div>
  <div class="t" style="left:79.8px;width:75px;text-align:center;top:37.3px;font-size:6.7px;color:#585858">Design</div>
  <div class="abs" style="left:6px;top:46px;width:74.7px;height:1px;background:#40a56c"></div>

  <div class="lab" style="top:64.7px">CANVAS</div>
  <div class="t" style="left:4.4px;top:80.2px;font-size:6.6px;color:#666">W</div>
  <div class="inp mono" style="left:14px;top:75px;width:61.7px;height:14px;line-height:16.6px">512</div>
  <div class="t" style="left:79px;top:80.2px;font-size:6.6px;color:#666"><span style="color:#444">×</span> H</div>
  <div class="inp mono" style="left:94px;top:75px;width:61.4px;height:14px;line-height:16.6px">512</div>
  <div class="preset mono" style="left:4px;width:49.8px;border:1px solid #9e9e9e;color:#d8d8d8;line-height:13.6px">512×512</div>
  <div class="preset mono" style="left:55px;width:50px">1920×1080</div>
  <div class="preset mono" style="left:107px;width:48.5px">2560×1440</div>

  <div class="div" style="top:112.5px"></div>
  <div class="lab" style="top:119.6px">SEED</div>
  <svg class="abs" style="left:8.8px;top:133.3px" width="5" height="5" viewBox="0 0 10 10"><path d="M9 0.800V9.200L1 5z" fill="#b8b8b8"/></svg>
  <div class="inp mono" style="left:21.2px;top:130px;width:34.6px;height:12px;line-height:14.4px">314</div>
  <svg class="abs" style="left:63.2px;top:133.3px" width="5" height="5" viewBox="0 0 10 10"><path d="M1 0.800V9.200L9 5z" fill="#b8b8b8"/></svg>
  <svg class="abs" style="left:79.4px;top:134px" width="4" height="4" viewBox="0 0 10 10" fill="none" stroke="#707070" stroke-width="1.500"><rect x="1" y="1" width="8" height="8" rx="1.5"/><path d="M3.500 3.500h0.100M6.500 6.500h0.100M6.500 3.500h0.100M3.500 6.500h0.100" stroke-linecap="round"/></svg>
  <div class="div" style="top:147px"></div>

  <div class="lab" style="top:152.8px">PARAMETERS</div>
  <div class="t" style="left:4.6px;top:165.8px;font-size:6.3px;color:#9a9a9a">Noise Scale</div>
  <div class="t mono" style="right:3.8px;top:166px;font-size:7.2px;letter-spacing:-0.5px;font-weight:bold;color:#f4f4f4">12</div>
  <div class="abs" style="left:5px;top:174.2px;width:150px;height:1.6px;background:#111;border-radius:1px"></div>
  <div class="abs" style="left:5px;top:174.2px;width:86px;height:1.6px;background:#f4f4f4;border-radius:1px"></div>
  <div class="abs" style="left:88.5px;top:172px;width:6px;height:6px;background:#fff;border-radius:50%"></div>
  <div class="div" style="top:180px"></div>

  <div class="lab" style="top:187.5px">COLORS</div>
  <div class="t" style="left:4.6px;top:203.6px;font-size:6.3px;color:#9a9a9a">Color A</div>
  <div class="abs" style="left:141px;top:198px;width:14px;height:14.4px;background:#5b21f5;border-radius:1px"></div>
  <div class="t" style="left:4.6px;top:223.6px;font-size:6.3px;color:#9a9a9a">Color B</div>
  <div class="abs" style="left:141px;top:218px;width:14px;height:14.4px;background:#e8431c;border-radius:1px"></div>
  <div class="div" style="top:237px"></div>

  <div class="lab" style="top:244.5px">SNAPSHOTS</div>
  <div class="abs" style="left:4.5px;top:254px;width:54.3px;height:14px;background:#2a2a2a;border-radius:1.5px;font-size:6.2px;color:#d0d0d0;text-align:center;line-height:14.4px">Save Snapshot</div>

  <div class="row" style="top:272px">
    <div class="abs" style="left:4px;top:2px;width:16px;height:16px;transform:translate(-0.3px,0.6px);background:#e8431c;overflow:hidden;display:flex">
<i style="flex:1 0 0;background:linear-gradient(#e7411c 0%,#e7411d 17%,#d73d35 33%,#b73566 50%,#922ca0 67%,#7023d4 83%,#5d1ef2 100%)"></i>
<i style="flex:1 0 0;background:linear-gradient(#e7411c 0%,#e7411c 17%,#dc3e2d 33%,#bf375a 50%,#9a2e94 67%,#7625cb 83%,#5f1fef 100%)"></i>
<i style="flex:1 0 0;background:linear-gradient(#e7411c 0%,#e7411c 17%,#da3e31 33%,#bb3660 50%,#962d9a 67%,#7324cf 83%,#5e1ff1 100%)"></i>
<i style="flex:1 0 0;background:linear-gradient(#e7411c 0%,#e54020 17%,#d03b40 33%,#ae3375 50%,#8829af 67%,#6922df 83%,#5b1ef5 100%)"></i>
<i style="flex:1 0 0;background:linear-gradient(#e7411c 0%,#dd3f2b 17%,#c13857 33%,#9c2e90 50%,#7925c7 67%,#601fed 83%,#5b1ef5 100%)"></i>
<i style="flex:1 0 0;background:linear-gradient(#e6411d 0%,#d53d38 17%,#b5346a 33%,#8f2ba4 50%,#6e23d7 67%,#5c1ef3 83%,#5b1ef5 100%)"></i>
<i style="flex:1 0 0;background:linear-gradient(#e6411e 0%,#d33c3b 17%,#b2346f 33%,#8c2aa9 50%,#6c22db 67%,#5c1ef4 83%,#5b1ef5 100%)"></i>
<i style="flex:1 0 0;background:linear-gradient(#e7411c 0%,#d93d32 17%,#ba3662 33%,#942c9d 50%,#7224d1 67%,#5d1ff1 83%,#5b1ef5 100%)"></i>
<i style="flex:1 0 0;background:linear-gradient(#e7411c 0%,#e14025 17%,#c8394c 33%,#a43083 50%,#8027bc 67%,#6420e7 83%,#5b1ef5 100%)"></i>
<i style="flex:1 0 0;background:linear-gradient(#e7411c 0%,#e6411d 17%,#d53d38 33%,#b5346a 50%,#8f2ba4 67%,#6e23d7 83%,#5c1ef3 100%)"></i>
<i style="flex:1 0 0;background:linear-gradient(#e7411c 0%,#e7411c 17%,#dc3e2e 33%,#be375b 50%,#992d95 67%,#7625cb 83%,#5f1fef 100%)"></i>
<i style="flex:1 0 0;background:linear-gradient(#e7411c 0%,#e7411c 17%,#db3e2f 33%,#bd365d 50%,#972d97 67%,#7524cd 83%,#5e1ff0 100%)"></i>
<i style="flex:1 0 0;background:linear-gradient(#e7411c 0%,#e6411e 17%,#d23c3c 33%,#b13470 50%,#8b2aaa 67%,#6c22db 83%,#5b1ef4 100%)"></i>
<i style="flex:1 0 0;background:linear-gradient(#e7411c 0%,#df3f28 17%,#c43852 33%,#a02f8a 50%,#7c26c3 67%,#6220eb 83%,#5b1ef5 100%)"></i>
<i style="flex:1 0 0;background:linear-gradient(#e7411d 0%,#d63d36 17%,#b73567 33%,#912ca1 50%,#7023d5 67%,#5c1ef3 83%,#5b1ef5 100%)"></i>
<i style="flex:1 0 0;background:linear-gradient(#e6411e 0%,#d33c3c 17%,#b1346f 33%,#8c2aaa 50%,#6c22db 67%,#5b1ef4 83%,#5b1ef5 100%)"></i>
    </div>
    <div class="t" style="left:22.2px;top:3.7px;font-size:6.3px;color:#f0f0f0">Snapshot 3</div>
    <div class="t" style="left:22.2px;top:12.9px;font-size:5.25px;color:#4c4c4c">Feb 19, 04:15 PM</div>
    <div class="t mono" style="left:119px;top:8.7px;font-size:5px;letter-spacing:-0.4px;color:#d4d4d4;font-weight:bold">Restore</div>
    <svg class="abs" style="left:141.7px;top:8.4px" width="4.6" height="4.6" viewBox="0 0 10 10" stroke="#6c6c6c" stroke-width="1.4" stroke-linecap="round"><path d="M1.5 1.5L8.500 8.500M8.500 1.5L1.5 8.500"/></svg>
  </div>
  <div class="row" style="top:294px;transform:translateY(0.6px)">
    <div class="abs" style="left:4px;top:2px;width:16px;height:16px;transform:translate(-0.3px,0.9px);background:#3b3fa0;overflow:hidden;display:flex">
<i style="flex:1 0 0;background:linear-gradient(#3b3fa0 0%,#3b3fa0 17%,#4644aa 33%,#5c4ebe 50%,#755ad5 67%,#8c64eb 83%,#9a6af7 100%)"></i>
<i style="flex:1 0 0;background:linear-gradient(#3b3fa0 0%,#3b3fa0 17%,#4342a7 33%,#574cb9 50%,#7057d1 67%,#8862e7 83%,#986af5 100%)"></i>
<i style="flex:1 0 0;background:linear-gradient(#3b3fa0 0%,#3b3fa0 17%,#4443a8 33%,#594dbc 50%,#7359d3 67%,#8a63e9 83%,#996af6 100%)"></i>
<i style="flex:1 0 0;background:linear-gradient(#3b3fa0 0%,#3d40a1 17%,#4b46ae 33%,#6251c4 50%,#7c5ddc 67%,#9166ef 83%,#9b6bf8 100%)"></i>
<i style="flex:1 0 0;background:linear-gradient(#3b3fa0 0%,#4242a6 17%,#554bb8 33%,#6e56cf 50%,#8762e5 67%,#9769f5 83%,#9b6bf8 100%)"></i>
<i style="flex:1 0 0;background:linear-gradient(#3c3fa0 0%,#4745ab 17%,#5e4fc0 33%,#775bd7 50%,#8e65ec 67%,#9a6bf7 83%,#9b6bf8 100%)"></i>
<i style="flex:1 0 0;background:linear-gradient(#3c3fa1 0%,#4945ad 17%,#6050c2 33%,#795cd9 50%,#8f66ed 67%,#9b6bf8 83%,#9b6bf8 100%)"></i>
<i style="flex:1 0 0;background:linear-gradient(#3b3fa0 0%,#4544a9 17%,#5a4dbd 33%,#7459d4 50%,#8b64ea 67%,#996af7 83%,#9b6bf8 100%)"></i>
<i style="flex:1 0 0;background:linear-gradient(#3b3fa0 0%,#3f41a4 17%,#5049b3 33%,#6954ca 50%,#8260e1 67%,#9568f2 83%,#9b6bf8 100%)"></i>
<i style="flex:1 0 0;background:linear-gradient(#3b3fa0 0%,#3b3fa0 17%,#4745ab 33%,#5d4fc0 50%,#775bd7 67%,#8e65ec 83%,#9a6bf7 100%)"></i>
<i style="flex:1 0 0;background:linear-gradient(#3b3fa0 0%,#3b3fa0 17%,#4343a7 33%,#574cba 50%,#7158d1 67%,#8963e7 83%,#986af6 100%)"></i>
<i style="flex:1 0 0;background:linear-gradient(#3b3fa0 0%,#3b3fa0 17%,#4443a8 33%,#584cbb 50%,#7258d2 67%,#8963e8 83%,#996af6 100%)"></i>
<i style="flex:1 0 0;background:linear-gradient(#3b3fa0 0%,#3c3fa1 17%,#4945ad 33%,#6050c2 50%,#7a5cda 67%,#9066ee 83%,#9b6bf8 100%)"></i>
<i style="flex:1 0 0;background:linear-gradient(#3b3fa0 0%,#4041a5 17%,#534ab6 33%,#6c55cd 50%,#8561e4 67%,#9669f4 83%,#9b6bf8 100%)"></i>
<i style="flex:1 0 0;background:linear-gradient(#3b3fa0 0%,#4644aa 17%,#5c4ebe 33%,#765ad6 50%,#8d65eb 67%,#9a6bf7 83%,#9b6bf8 100%)"></i>
<i style="flex:1 0 0;background:linear-gradient(#3c3fa1 0%,#4945ad 17%,#6050c2 33%,#7a5cd9 50%,#9066ed 67%,#9b6bf8 83%,#9b6bf8 100%)"></i>
    </div>
    <div class="t" style="left:22.2px;top:3.7px;font-size:6.3px;color:#f0f0f0">Snapshot 2</div>
    <div class="t" style="left:22.2px;top:12.9px;font-size:5.25px;color:#4c4c4c">Feb 19, 04:16 PM</div>
    <div class="t mono" style="left:119px;top:8.7px;font-size:5px;letter-spacing:-0.4px;color:#d4d4d4;font-weight:bold">Restore</div>
    <svg class="abs" style="left:141.7px;top:8.4px" width="4.6" height="4.6" viewBox="0 0 10 10" stroke="#6c6c6c" stroke-width="1.4" stroke-linecap="round"><path d="M1.5 1.5L8.500 8.500M8.500 1.5L1.5 8.500"/></svg>
  </div>
</div>

<svg class="abs" style="left:0;top:0;pointer-events:none" width="640" height="400" viewBox="0 0 640 400" fill="none"><rect x="0.5" y="0.5" width="639" height="397.8" rx="6.5" stroke="#fff" stroke-opacity="0.14" stroke-width="1"/><path d="M5 0.5H635" stroke="#fff" stroke-opacity="0.07"/></svg>
<!-- status -->
<div id="status" class="mono">
  <div class="t" style="left:6.5px;top:4.8px">full-workspace.genart-workspace</div>
  <div class="t" style="left:104px;top:4.8px;color:#303030">|</div>
  <div class="t" style="left:110.3px;top:4.8px">6 sketches</div>
  <div class="t" style="left:144.7px;top:4.8px;color:#303030">|</div>
  <div class="t" style="left:152.3px;top:4.8px">140, 150 50%</div>
  <div class="t" style="left:507px;top:4.8px">GLSL Gradient (glsl)</div>
  <svg class="abs" style="left:570px;top:4px" width="6" height="6" viewBox="0 0 6 6"><circle cx="2.7" cy="2.8" r="1.35" fill="#4fc76f"/></svg>
  <div class="t" style="left:576.6px;top:4.8px">MCP :3333 (1 agent)</div>
</div>

</div>
</body>
</html>
